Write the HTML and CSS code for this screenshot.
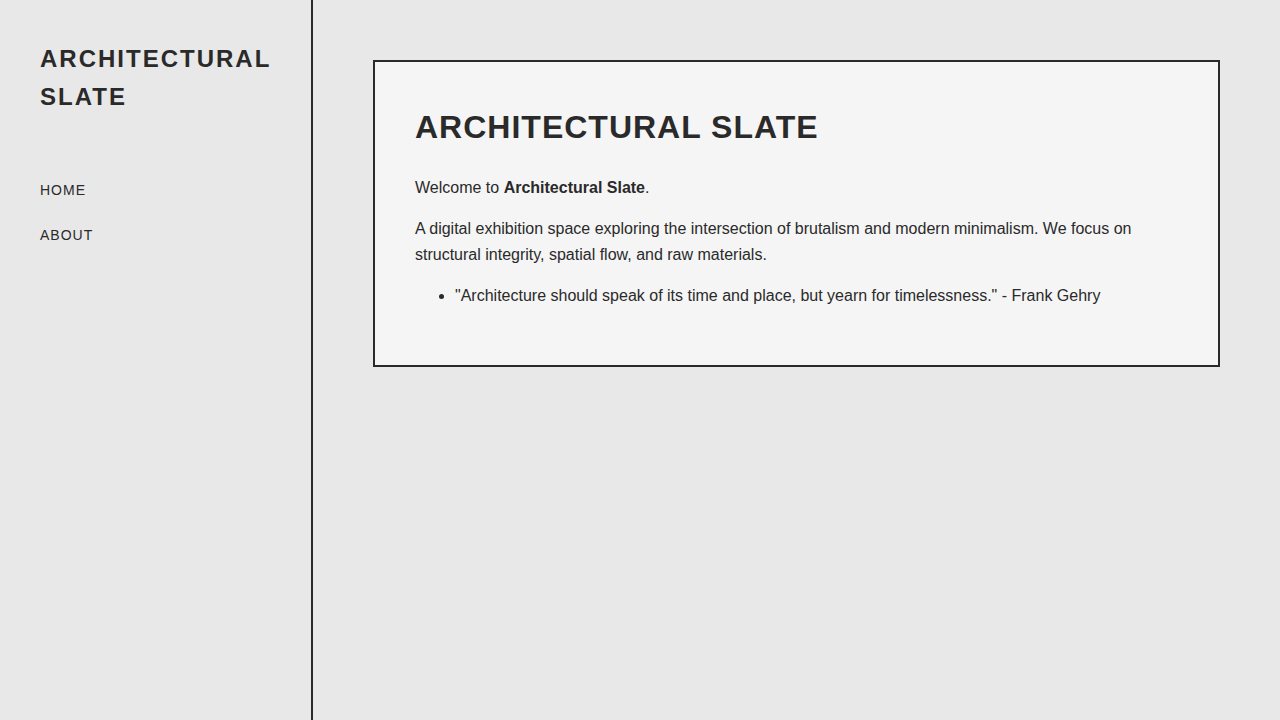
FILE: index.html
```html
<!DOCTYPE html>
<html lang="en">
<head>
<meta charset="utf-8">
<title>Architectural Slate</title>
<link rel="stylesheet" href="styles.css">
</head>
<body>
<div class="layout">
  <aside class="sidebar">
    <div class="logo">ARCHITECTURAL SLATE</div>
    <nav class="nav">
      <a href="#" class="nav-link">HOME</a>
      <a href="#" class="nav-link">ABOUT</a>
    </nav>
  </aside>
  <main class="main">
    <section class="card">
      <h1 class="title">ARCHITECTURAL SLATE</h1>
      <p class="text">Welcome to <strong>Architectural Slate</strong>.</p>
      <p class="text">A digital exhibition space exploring the intersection of brutalism and modern minimalism. We focus on structural integrity, spatial flow, and raw materials.</p>
      <ul class="list">
        <li>"Architecture should speak of its time and place, but yearn for timelessness." - Frank Gehry</li>
      </ul>
    </section>
  </main>
</div>
</body>
</html>
```

FILE: styles.css
```css
* { box-sizing: border-box; }
html, body {
  margin: 0;
  padding: 0;
  height: 100%;
}
body {
  font-family: "Liberation Sans", Arial, sans-serif;
  color: #2a2a2a;
  background: #e8e8e8;
  line-height: 1.6;
  font-size: 16px;
}
.layout {
  display: flex;
  min-height: 100vh;
}
.sidebar {
  width: 313px;
  flex-shrink: 0;
  border-right: 2px solid #2a2a2a;
  padding: 40px;
  background: #e8e8e8;
}
.logo {
  font-size: 24px;
  font-weight: bold;
  letter-spacing: 2px;
  line-height: 1.6;
  margin-right: -10px;
}
.nav {
  display: flex;
  flex-direction: column;
  gap: 22.6px;
  margin-top: 62px;
}
.nav-link {
  font-size: 14px;
  letter-spacing: 1px;
  color: #2a2a2a;
  text-decoration: none;
  line-height: 1.6;
}
.main {
  flex: 1;
  padding: 60px;
}
.card {
  background: #f5f5f5;
  border: 2px solid #2a2a2a;
  padding: 40px;
}
.title {
  font-size: 32px;
  letter-spacing: 1px;
  line-height: 1.6;
  margin: 0 0 21.44px;
}
.text {
  margin: 0 0 16px;
}
.list {
  margin: 0 0 16px;
  padding-left: 40px;
}
```
